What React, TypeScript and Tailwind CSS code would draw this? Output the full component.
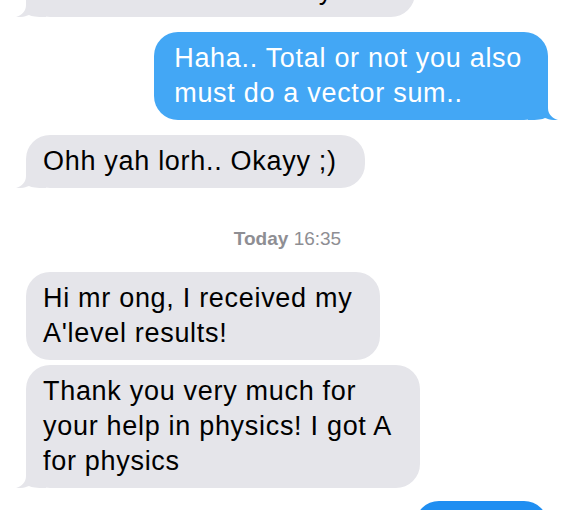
import React from 'react';

type Side = 'in' | 'out';

interface BubbleProps {
  side: Side;
  lines: string[];
  tail?: boolean;
  color?: string;
  className?: string;
}

const Tail: React.FC<{ side: Side; color: string }> = ({ side, color }) => (
  <svg
    width="30"
    height="24"
    viewBox="0 0 30 24"
    className={
      side === 'in'
        ? 'absolute bottom-0 left-[-10px]'
        : 'absolute bottom-0 right-[-10px] scale-x-[-1]'
    }
  >
    <path
      d="M10 0 L10 12 C10 18 6 22 0 24 C6 24.5 10 23 13 22 C16 23.5 20 24 30 24 L30 0 Z"
      fill={color}
    />
  </svg>
);

const Bubble: React.FC<BubbleProps> = ({ side, lines, tail = true, color, className = '' }) => {
  const isIn = side === 'in';
  const fill = color ?? (isIn ? '#e5e5ea' : '#43a7f5');
  return (
    <div
      className={
        'relative rounded-[24px] py-[9px] text-[27px] leading-[35px] tracking-[0.7px] whitespace-nowrap ' +
        (isIn
          ? 'self-start ml-[26px] text-black pl-[17px] pr-[28px] '
          : 'self-end mr-[27px] text-white pl-[20px] pr-[26px] ') +
        className
      }
      style={{ backgroundColor: fill }}
    >
      {tail && <Tail side={side} color={fill} />}
      <div className="relative">
        {lines.map((l, i) => (
          <div key={i}>{l}</div>
        ))}
      </div>
    </div>
  );
};

export default function App() {
  return (
    <div
      className="w-[575px] h-[510px] overflow-hidden bg-white flex flex-col"
      style={{ fontFamily: '"Liberation Sans", Arial, sans-serif' }}
    >
      <Bubble
        side="in"
        className="-mt-[71px]"
        lines={['I think the direction matters', 'which one is the total ya..']}
      />

      <Bubble
        side="out"
        className="mt-[15px]"
        lines={['Haha.. Total or not you also', 'must do a vector sum..']}
      />

      <Bubble side="in" className="mt-[15px]" lines={['Ohh yah lorh.. Okayy ;)']} />

      <div className="mt-[39px] mb-[21px] text-center text-[19px] leading-[24px] text-[#8e8e93]">
        <span className="font-bold">Today</span> 16:35
      </div>

      <Bubble side="in" tail={false} lines={['Hi mr ong, I received my', "A'level results!"]} />

      <Bubble
        side="in"
        className="mt-[5px]"
        lines={['Thank you very much for', 'your help in physics! I got A', 'for physics']}
      />

      <Bubble side="out" className="mt-[13px]" color="#1f8ef1" lines={['Great!!']} />
    </div>
  );
}
